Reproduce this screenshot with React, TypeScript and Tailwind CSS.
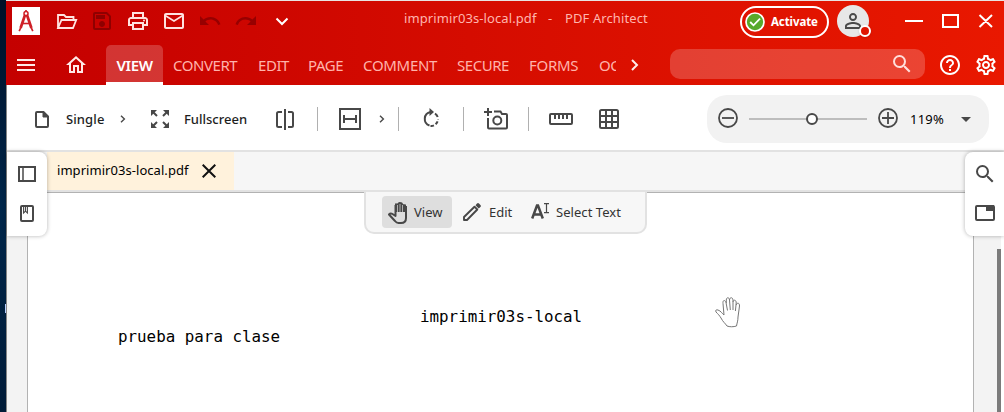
import React from "react";
import {
  MdOutlineSave,
  MdOutlinePrint,
  MdOutlineEmail,
  MdUndo,
  MdRedo,
  MdOutlineHome,
  MdSearch,
  MdHelpOutline,
  MdOutlineSettings,
  MdPersonOutline,
} from "react-icons/md";

const ribbonTabs = [
  { name: "CONVERT", box: "w-[85px] tracking-[-0.45px]" },
  { name: "EDIT", box: "w-[50px] tracking-[-0.45px]" },
  { name: "PAGE", box: "w-[55px] tracking-[-0.45px]" },
  { name: "COMMENT", box: "w-[94px] tracking-[-0.3px]" },
  { name: "SECURE", box: "w-[72px] tracking-[-0.45px]" },
  { name: "FORMS", box: "w-[70px] tracking-[-0.3px]" },
];

function Chevron({ className }: { className: string }) {
  return (
    <svg viewBox="0 0 6 8" className={className} fill="none" stroke="currentColor" strokeWidth="1.4">
      <path d="M1 .7 4.4 4 1 7.3" />
    </svg>
  );
}

function TitleBar() {
  return (
    <div className="flex h-[42px] items-start">
      <div className="ml-[6px] mt-[6px] h-[28px] w-[28px] bg-white">
        <svg viewBox="0 0 28 28" className="h-7 w-7" fill="none" stroke="#cf2027">
          <circle cx="14" cy="6.500" r="2" strokeWidth="1.500" />
          <path d="M13 8 8.600 21M15 8l4.400 13" strokeWidth="2.700" />
          <path d="M10.500 16.500h7" strokeWidth="1.600" />
          <path d="M8.600 21 7.200 24.200M19.400 21l1.400 3.200M14 3v2" strokeWidth="1.700" />
        </svg>
      </div>
      <div className="ml-[14px] mt-[8px] flex gap-[12px] text-[24px] text-[#ffe3e0]">
        <svg viewBox="0 0 24 24" className="h-6 w-6" fill="none" stroke="currentColor" strokeWidth="1.800">
          <path d="M4 19V6h6l2 2h7.500v3M4 19 7.500 11h14.700L19 19z" />
        </svg>
        <MdOutlineSave className="text-[#8f0000]" />
        <MdOutlinePrint />
        <MdOutlineEmail />
        <MdUndo className="text-[#970000]" />
        <MdRedo className="text-[#970000]" />
        <svg viewBox="0 0 24 24" className="h-6 w-6" fill="none" stroke="#fff" strokeWidth="2">
          <path d="m6.500 9.500 5.500 5.500 5.500-5.500" />
        </svg>
      </div>
      <div className="ml-[110px] mt-[8px] flex h-5 w-[336px] items-center whitespace-pre text-[13px] text-[#ffb5ae]">
        <span className="w-[144px] tracking-[0.1px]">imprimir03s-local.pdf</span>
        <span className="w-[17px]">-</span>
        <span className="tracking-[0.1px]">PDF Architect</span>
      </div>
      <div className="mt-[5px] flex h-8 w-[89px] items-center rounded-full border-2 border-white pl-[3px] text-white">
        <svg viewBox="0 0 20 20" className="h-5 w-5">
          <circle cx="10" cy="10" r="9" fill="#57a92b" stroke="#fff" strokeWidth="1.700" />
          <path d="m5.200 10 3.300 3.300L15 6.700" fill="none" stroke="#fff" strokeWidth="1.800" />
        </svg>
        <span className="ml-[6px] text-[11.500px] font-bold tracking-[-0.1px]">Activate</span>
      </div>
      <div className="relative ml-[8px] mt-[4px] flex h-8 w-8 items-center justify-center rounded-full bg-[#e7e7e7] text-[24px] text-[#4a4a4a]">
        <MdPersonOutline />
        <span className="absolute left-[22px] top-[20px] h-3 w-3 rounded-full border-2 border-white bg-[#e01400] shadow" />
      </div>
      <svg viewBox="0 0 88 16" className="ml-[36px] mt-[12px] h-4 w-[88px]" fill="none" stroke="#fff" strokeWidth="2">
        <path d="M0 8h18M38 2h15v12H38zM74.500 2l12.500 12M87 2 74.500 14" />
      </svg>
    </div>
  );
}

function Ribbon() {
  return (
    <div className="flex h-[42px] items-start text-[15px]">
      <svg viewBox="0 0 18 12" className="ml-[11px] mt-[16px] h-3 w-[18px]" stroke="#ffe9e7" strokeWidth="2">
        <path d="M0 1h18M0 6h18M0 11h18" />
      </svg>
      <MdOutlineHome className="ml-[29px] mt-[10px] text-[24px] text-[#ffe9e7]" />
      <div className="ml-[18px] mt-[2px] flex h-[40px] w-[57px] items-center justify-center rounded-t-[5px] border-b-[3px] border-white bg-white/20 pt-[3px] font-semibold tracking-[-0.4px] text-white">
        VIEW
      </div>
      <div className="ml-[10px] flex h-[42px] items-center pt-[3px] text-[#ffb3ab]">
        {ribbonTabs.map((t) => (
          <span key={t.name} className={t.box}>
            {t.name}
          </span>
        ))}
        <span className="w-[17px] overflow-hidden tracking-[-0.4px]">OC</span>
      </div>
      <svg viewBox="0 0 8 12" className="ml-[15px] mt-[16px] h-3 w-2" fill="none" stroke="#ffeceb" strokeWidth="2">
        <path d="m1 1 5 5-5 5" />
      </svg>
      <div className="ml-[31px] mt-[6px] flex h-[30px] w-[255px] items-center justify-end rounded-[10px] bg-white/20 pr-[11px] text-[24px] text-[#ffdedb]">
        <MdSearch />
      </div>
      <MdHelpOutline className="ml-[13px] mt-[10px] text-[24px] text-white" />
      <MdOutlineSettings className="ml-[12px] mt-[10px] text-[24px] text-white" />
    </div>
  );
}

function Divider({ className }: { className: string }) {
  return <span className={"h-6 w-px bg-[#b0b0b0] " + className} />;
}

function Toolbar() {
  return (
    <div className="flex h-[65px] items-center bg-white pt-[3px] text-[13px] text-[#1e1e1e]">
      <svg viewBox="0 0 14 17" className="ml-[28px] h-[17px] w-[14px]" fill="none" stroke="#484848" strokeWidth="2">
        <path d="M2 1h6.500L13 5.500V15a1 1 0 0 1-1 1H2a1 1 0 0 1-1-1V2a1 1 0 0 1 1-1z" />
        <path d="M8 1v5h5z" fill="#484848" strokeWidth="1" />
      </svg>
      <span className="ml-[17px] w-[54px] pt-px font-medium tracking-[0.1px]">Single</span>
      <Chevron className="h-2 w-[6px] text-[#484848]" />
      <svg viewBox="0 0 18 18" className="ml-[25px] h-[18px] w-[18px]" fill="#484848" stroke="#484848" strokeWidth="2">
        <path d="M0 0h6L0 6zM12 0h6v6zM0 12v6h6zM18 12v6h-6z" stroke="none" />
        <path d="m2 2 4 4M16 2l-4 4M2 16l4-4M16 16l-4-4" />
      </svg>
      <span className="ml-[15px] w-[92px] pt-px font-medium">Fullscreen</span>
      <svg viewBox="0 0 18 21" className="h-[21px] w-[18px]" fill="none" stroke="#484848" strokeWidth="2">
        <path d="M6 3H2.500Q1 3 1 4.500v12Q1 18 2.500 18H6M12 3h3.500Q17 3 17 4.500v12q0 1.500-1.500 1.500H12M9 0v21" />
      </svg>
      <Divider className="ml-[23px]" />
      <svg viewBox="0 0 22 22" className="ml-[21px] h-[22px] w-[22px]" fill="none" stroke="#484848" strokeWidth="2">
        <path d="M1 1h20v20H1zM5 7v8M17 7v8M5 11h12" />
      </svg>
      <Chevron className="ml-[18px] h-2 w-[6px] text-[#484848]" />
      <Divider className="ml-[13px]" />
      <svg viewBox="0 0 18 19" className="mb-[3px] ml-[23px] h-[19px] w-[18px]" fill="none" stroke="#484848" strokeWidth="2">
        <path d="M7.500 17.500A7 7 0 0 1 8.500 4" />
        <path d="M7.500 0 12 4 7.500 8z" fill="#484848" stroke="none" />
        <path d="M8.500 18a7 7 0 0 0 7.500-7" strokeDasharray="3.500 2" />
        <path d="M13 5.500q2 1.500 2.700 3.500" />
      </svg>
      <Divider className="ml-[23px]" />
      <svg viewBox="0 0 24 22" className="mb-px ml-[20px] h-[22px] w-6" fill="none" stroke="#484848" strokeWidth="2">
        <path d="M0 4h8M4 0v8M10 3.500h6.500L18 6h4q1 0 1 1v12.500q0 1-1 1H5q-1 0-1-1V10" />
        <circle cx="13.300" cy="12.500" r="4" />
      </svg>
      <Divider className="ml-[20px]" />
      <svg viewBox="0 0 24 12" className="ml-[20px] h-3 w-6" fill="none" stroke="#484848" strokeWidth="2">
        <rect x="1" y="1" width="22" height="10" rx="1" />
        <path d="M6 1v5M10 1v5M14 1v5M18 1v5" strokeWidth="2" />
      </svg>
      <svg viewBox="0 0 20 20" className="ml-[26px] h-5 w-5" fill="none" stroke="#484848" strokeWidth="2">
        <rect x="1" y="1" width="18" height="18" rx="1.500" />
        <path d="M7 1v18M13 1v18M1 7h18M1 13h18" />
      </svg>
      <div className="ml-[88px] flex h-[48px] w-[282px] items-center rounded-[20px] bg-[#f2f2f2] pl-[11px]">
        <svg viewBox="0 0 20 20" className="mb-[2px] h-5 w-5" fill="none" stroke="#484848" strokeWidth="1.800">
          <circle cx="10" cy="10" r="9" />
          <path d="M4 10h12" />
        </svg>
        <svg viewBox="0 0 118 14" className="ml-[11px] h-[14px] w-[118px]">
          <path d="M0 7h118" stroke="#bdbdbd" strokeWidth="2" />
          <circle cx="63" cy="7" r="5" fill="#fff" stroke="#484848" strokeWidth="2" />
        </svg>
        <svg viewBox="0 0 20 20" className="mb-[2px] ml-[11px] h-5 w-5" fill="none" stroke="#484848" strokeWidth="1.800">
          <circle cx="10" cy="10" r="9" />
          <path d="M4 10h12M10 4v12" />
        </svg>
        <span className="ml-[12px] w-[51px] pt-px tracking-[0.2px] text-black">119%</span>
        <svg viewBox="0 0 10 5" className="h-[5px] w-[10px]" fill="#484848">
          <path d="M0 0h10L5 5z" />
        </svg>
      </div>
    </div>
  );
}

function DocumentTabs() {
  return (
    <div className="flex h-[42px] border-y-2 border-[#e2e2e2] bg-[#f6f6f6]">
      <div className="ml-[40px] flex w-[187px] items-center bg-[#fff2dc] pl-[10px] text-[13px] text-black">
        <span className="w-[145px] whitespace-nowrap tracking-[0.05px]">imprimir03s-local.pdf</span>
        <svg viewBox="0 0 14 14" className="h-[14px] w-[14px]" stroke="#111" strokeWidth="2">
          <path d="m.7.7 12.600 12.600M13.300.7.7 13.300" />
        </svg>
      </div>
    </div>
  );
}

function SidePanels() {
  return (
    <>
      <div className="absolute left-[7px] top-[152px] flex h-[84px] w-[40px] flex-col items-center rounded-r-[8px] bg-white pt-[14px] shadow-[0_0_4px_rgba(0,0,0,0.3)]">
        <svg viewBox="0 0 18 16" className="h-4 w-[18px]" fill="none" stroke="#484848" strokeWidth="2">
          <path d="M1 1h16v14H1z" />
          <path d="M5 1v14" strokeWidth="1.500" />
        </svg>
        <svg viewBox="0 0 14 17" className="mt-[23px] h-[17px] w-[14px]" fill="none" stroke="#484848" strokeWidth="2">
          <rect x="1" y="1" width="12" height="15" rx="1" />
          <path d="M3.600 1v7l1.900-1.800L7.400 8V1M5.500 1v5" strokeWidth="1.100" />
        </svg>
      </div>
      <div className="absolute left-[965px] top-[152px] flex h-[84px] w-[39px] flex-col items-center rounded-l-[8px] bg-white pt-[10px] text-[24px] text-[#484848] shadow-[0_0_4px_rgba(0,0,0,0.3)]">
        <MdSearch />
        <svg viewBox="0 0 20 16" className="mt-[19px] h-4 w-5" fill="none" stroke="#484848" strokeWidth="2">
          <rect x="1" y="1" width="18" height="14" rx="1" />
          <path d="M11 0h8v6h-8z" fill="#484848" stroke="none" />
        </svg>
      </div>
    </>
  );
}

function ModeBar() {
  return (
    <div className="absolute left-[364px] top-[192px] flex h-[42px] w-[283px] rounded-b-[10px] border-2 border-t-0 border-[#e2e2e2] bg-[#f7f7f7] text-[13px] text-[#333]">
      <div className="ml-[16px] mt-[4px] flex h-8 w-[70px] items-center rounded-[4px] bg-[#dedede] pl-[6px]">
        <svg viewBox="0 0 20 23" className="h-[23px] w-5" fill="none" stroke="#484848" strokeWidth="2" strokeLinejoin="round">
          <path d="M7.500 12V4M18 5v12q0 5-5 5h-2.500q-2 0-3.500-2l-6-6.500q1.500-1.800 3.500-.5L7.500 15v-3" />
          <path d="M7 3.500h1.500M16 4.500h2" />
          <path d="M7 11V3.500Q8 2 9.500 2.500 11 .5 13 1.300q1.500-.3 2 1.700 2.500 0 3 2.500V11z" fill="#484848" stroke="none" />
          <path d="M9.500 4v7M12 3v8M14.500 4v7" strokeWidth=".7" stroke="#dedede" />
        </svg>
        <span className="ml-[6px] pt-px">View</span>
      </div>
      <svg viewBox="0 0 18 18" className="ml-[11px] mt-[11px] h-[18px] w-[18px]" fill="none" stroke="#484848">
        <path d="M1 17v-3L11.500 3.700 14.300 6.500 4 17z" strokeWidth="1.900" strokeLinejoin="round" />
        <path d="m12.500 2.300 1.500-1.700q1-1 2 0l1.400 1.400q1 1 0 2l-1.700 1.500z" fill="#484848" stroke="none" />
      </svg>
      <span className="ml-[8px] mt-[11px] w-[42px]">Edit</span>
      <svg viewBox="0 0 18 17" className="mt-[11px] h-[17px] w-[18px]" fill="none" stroke="#484848">
        <path d="M1.200 15.500 6 2.500h1l4.800 13M3.500 11.500h6.500" strokeWidth="2.500" />
        <path d="M13 .6h5M13 9.600h5M15.500.6v9" strokeWidth="1.200" />
      </svg>
      <span className="ml-[7px] mt-[11px] whitespace-nowrap tracking-[0.05px]">Select Text</span>
    </div>
  );
}

function DocumentView() {
  return (
    <div className="flex h-[220px] bg-[#f3f3f3]">
      <div className="ml-[20px] w-[947px] border border-b-0 border-[#b2b2b2] bg-white font-['DejaVu_Sans_Mono',monospace] text-[15.850px] leading-[20px] text-black">
        <div className="flex pt-[114px]">
          <p className="ml-[392px] w-[294px] whitespace-nowrap">imprimir03s-local</p>
          <svg viewBox="0 0 28 32" className="-mt-[11px] h-8 w-7" fill="none" stroke="#777" strokeWidth="1">
            <path d="M10 19 9 7.500C8.500 4 11 3.500 12 6.500l1.500 8M12.300 7V4c0-3 3-3 3.200 0l.8 10M15.500 4c.2-3 3.300-3 3.500 0v10M19 6c.5-3 3.500-2 3.200 1l-.8 8M22.200 9c1-3 3.500-2 3.300 1L24 21c0 4-1 6-1.500 9-3 1-7 1-9.500 0-2-3-4-4-6-8-1.500-2.500-3-4-5-6-1-2 .5-2.500 2-2 3 1 4 3.500 6 5" />
          </svg>
        </div>
        <p className="-mt-px ml-[90px] whitespace-nowrap">prueba para clase</p>
      </div>
      <div className="ml-auto mt-[57px] w-[4px] bg-[#7b7b7b]" />
      <div className="w-[3px] bg-white" />
    </div>
  );
}

export default function App() {
  return (
    <div className="relative flex h-[412px] w-[1004px] overflow-hidden bg-white font-['Noto_Sans','Open_Sans',sans-serif]">
      <div className="w-[6px] shrink-0 bg-linear-to-b from-[#001027] via-[#00264a] to-[#001b38]">
        <div className="ml-[5px] mt-[304px] h-[9px] w-px bg-[#b8cfff]" />
      </div>
      <div className="w-[998px] shrink-0">
        <div className="h-px bg-[#e8e4e2]" />
        <header className="h-[84px] bg-linear-to-r from-[#c40000] to-[#e91800]">
          <TitleBar />
          <Ribbon />
        </header>
        <main className="border-l border-[#858585]">
          <Toolbar />
          <DocumentTabs />
          <DocumentView />
        </main>
      </div>
      <SidePanels />
      <ModeBar />
    </div>
  );
}
